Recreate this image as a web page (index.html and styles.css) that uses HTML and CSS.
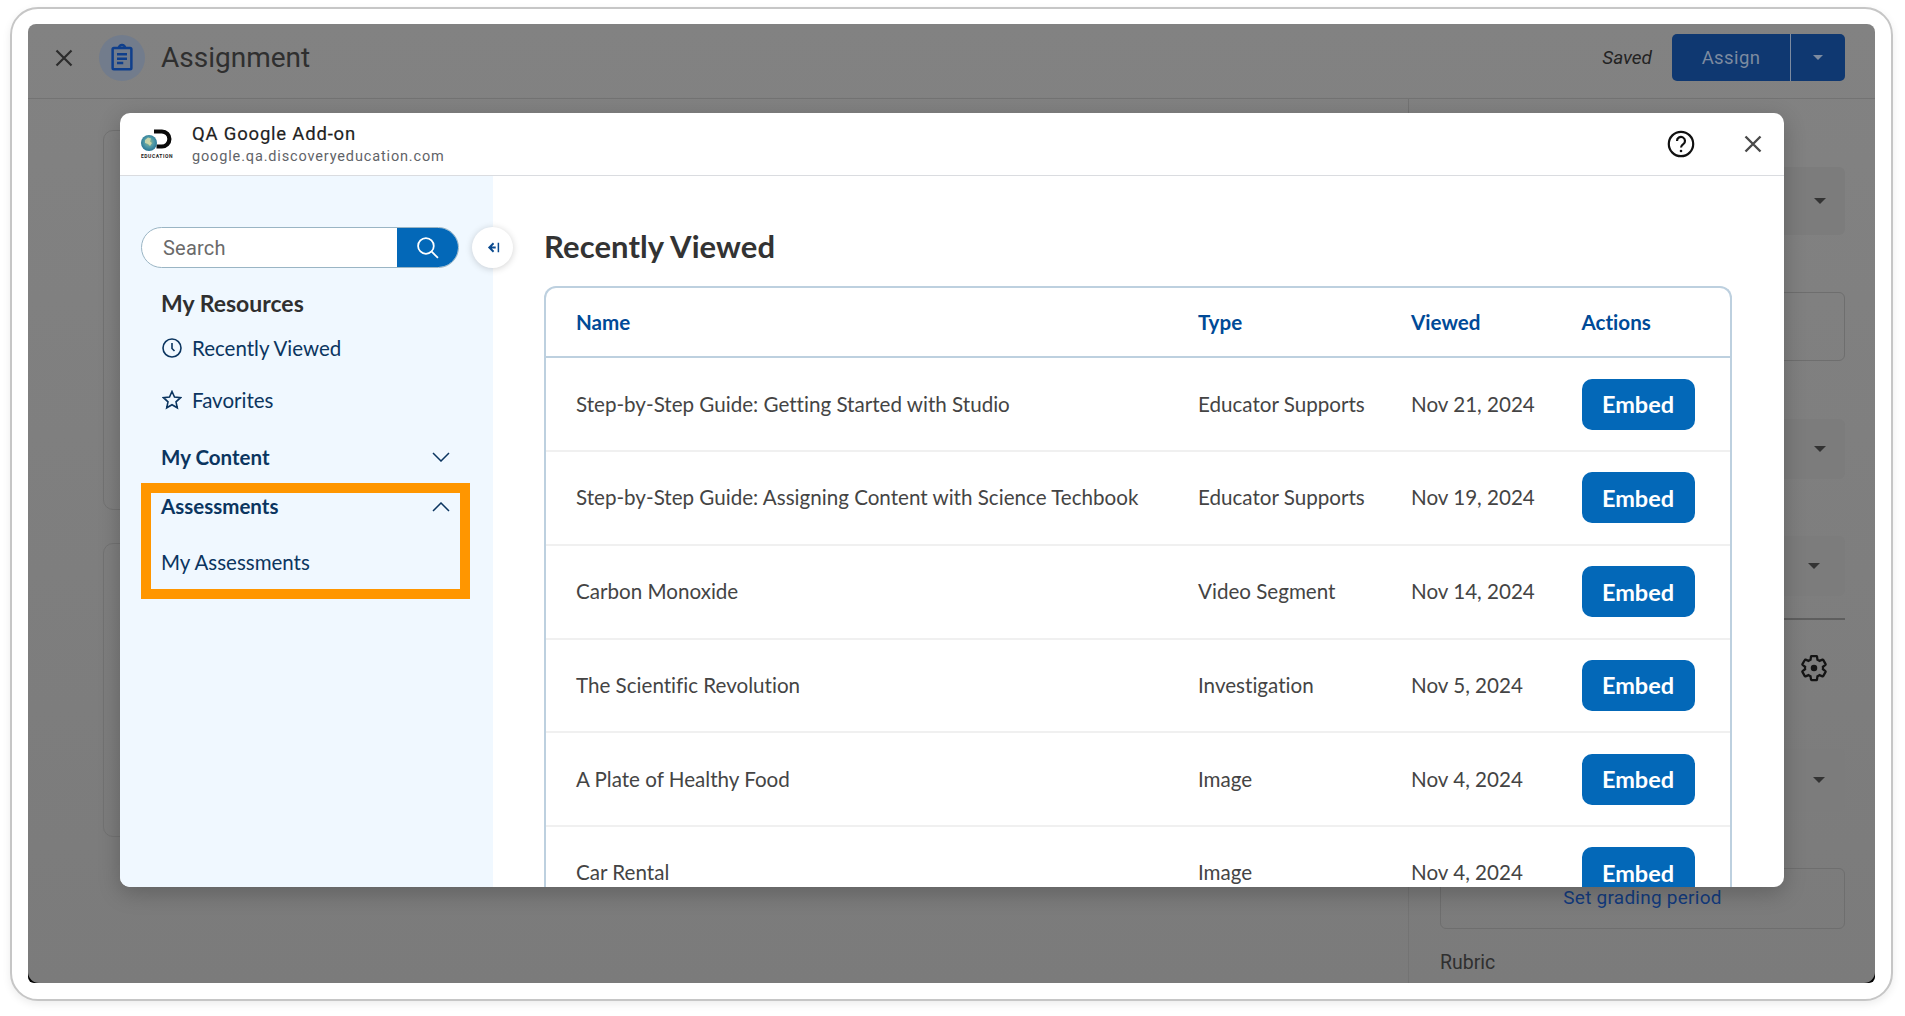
FILE: index.html
```html
<!DOCTYPE html>
<html lang="en">
<head>
<meta charset="utf-8">
<title>Assignment</title>
<link rel="stylesheet" href="styles.css">
</head>
<body>
<div class="frame">
  <div class="screen">
    <div class="screen-inner">
      <header class="topbar">
        <svg class="top-close" viewBox="0 0 20 20"><path d="M2.5 2.5l15 15M17.5 2.5l-15 15"/></svg>
        <span class="doc-badge">
          <svg class="doc-icon" viewBox="0 0 24 24"><path d="M5.5 4h13a1 1 0 0 1 1 1v15a1 1 0 0 1-1 1h-13a1 1 0 0 1-1-1V5a1 1 0 0 1 1-1z"/><path d="M9.5 4a2.5 2.5 0 0 1 5 0M8 9h8M8 12.5h8M8 16h5"/></svg>
        </span>
        <h1 class="top-title">Assignment</h1>
        <span class="saved">Saved</span>
        <div class="assign">
          <span class="assign-main">Assign</span>
          <span class="assign-more"><i class="caret caret-light"></i></span>
        </div>
      </header>
      <div class="workspace">
        <div class="bg-left">
          <div class="bg-card bg-card-one"></div>
          <div class="bg-card bg-card-two"></div>
        </div>
        <aside class="bg-right">
          <div class="dd dd-a"><i class="caret"></i></div>
          <div class="outline-box outline-a"></div>
          <div class="dd dd-b"><i class="caret"></i></div>
          <div class="dd dd-c"><i class="caret"></i></div>
          <div class="rule"></div>
          <div class="gear-row">
            <svg class="gear" viewBox="0 0 24 24"><path d="M19.14 12.94c.04-.3.06-.61.06-.94 0-.32-.02-.64-.07-.94l2.03-1.58c.18-.14.23-.41.12-.61l-1.92-3.32c-.12-.22-.37-.29-.59-.22l-2.39.96c-.5-.38-1.03-.7-1.62-.94l-.36-2.54c-.04-.24-.24-.41-.48-.41h-3.84c-.24 0-.43.17-.47.41l-.36 2.54c-.59.24-1.13.57-1.62.94l-2.39-.96c-.22-.08-.47 0-.59.22L2.74 8.87c-.12.21-.08.47.12.61l2.03 1.58c-.05.3-.09.63-.09.94s.02.64.07.94l-2.03 1.58c-.18.14-.23.41-.12.61l1.92 3.32c.12.22.37.29.59.22l2.39-.96c.5.38 1.03.7 1.62.94l.36 2.54c.05.24.24.41.48.41h3.84c.24 0 .44-.17.47-.41l.36-2.54c.59-.24 1.13-.56 1.62-.94l2.39.96c.22.08.47 0 .59-.22l1.92-3.32c.12-.22.07-.47-.12-.61l-2.01-1.58z"/><circle class="gear-dot" cx="12" cy="12" r="2.6"/></svg>
          </div>
          <div class="dd dd-d"><i class="caret"></i></div>
          <div class="outline-box outline-b"><span class="grading">Set grading period</span></div>
          <div class="rubric">Rubric</div>
        </aside>
      </div>
    </div>

    <section class="modal">
      <header class="modal-head">
        <div class="logo">
          <svg class="logo-mark" viewBox="0 0 34 23">
            <defs>
              <radialGradient id="globe" cx="50%" cy="45%" r="60%">
                <stop offset="0" stop-color="#9dbb86"/>
                <stop offset="0.5" stop-color="#4f9aa8"/>
                <stop offset="1" stop-color="#1d6d90"/>
              </radialGradient>
            </defs>
            <path class="logo-d" d="M14 0.500h8a9.500 9.500 0 0 1 0 19h-5.500v-4h5.300a5.500 5.500 0 0 0 0-11H14z"/>
            <circle cx="9" cy="14" r="8" fill="url(#globe)"/>
            <path d="M5 11l3-2.500 3 1-1 3 2 1.500-2 3-2-2-3-1z" fill="#d5dcae" opacity=".85"/>
          </svg>
          <span class="logo-text">EDUCATION</span>
        </div>
        <div class="addon">
          <div class="addon-name">QA Google Add-on</div>
          <div class="addon-url">google.qa.discoveryeducation.com</div>
        </div>
        <svg class="help" viewBox="0 0 28 28">
          <circle cx="14" cy="14" r="12.2"/>
          <path d="M10 11a4 4 0 1 1 6.300 3.200c-1.400 1-2.300 1.700-2.300 3.300"/>
          <circle class="help-dot" cx="14" cy="21" r="1.300"/>
        </svg>
        <svg class="modal-close" viewBox="0 0 18 18"><path d="M1.500 1.500l15 15M16.500 1.500l-15 15"/></svg>
      </header>
      <div class="modal-body">
        <nav class="sidebar">
          <div class="search">
            <span class="search-field">Search</span>
            <span class="search-btn">
              <svg class="search-icon" viewBox="0 0 22 22"><circle cx="9.500" cy="9.500" r="7.500"/><path d="M15 15l6 6"/></svg>
            </span>
          </div>
          <button class="collapse" type="button">
            <svg viewBox="0 0 14 14"><path class="collapse-arrow" d="M8 3L4 7l4 4M4 7h6"/><path class="collapse-bar" d="M12.500 2.500v9"/></svg>
          </button>
          <h2 class="nav-head">My Resources</h2>
          <a class="nav-link nav-recent">
            <svg class="nav-icon" viewBox="0 0 20 20"><circle cx="10" cy="10" r="9"/><path d="M10 5v5.500l2.500 2.500"/></svg>
            Recently Viewed
          </a>
          <a class="nav-link nav-fav">
            <svg class="nav-icon" viewBox="0 0 20 20"><path d="M10 1.500l2.500 5.600 6 .6-4.500 4.100 1.300 6L10 14.700l-5.300 3.100 1.300-6L1.500 7.700l6-.6z"/></svg>
            Favorites
          </a>
          <div class="nav-group nav-content">
            <span>My Content</span>
            <svg class="chev" viewBox="0 0 18 10"><path d="M1 1l8 8 8-8"/></svg>
          </div>
          <div class="highlight">
            <div class="nav-group">
              <span>Assessments</span>
              <svg class="chev" viewBox="0 0 18 10"><path d="M1 9l8-8 8 8"/></svg>
            </div>
            <a class="nav-sub">My Assessments</a>
          </div>
        </nav>
        <main class="main">
          <h2 class="main-title">Recently Viewed</h2>
          <div class="table">
            <div class="tr th">
              <span>Name</span><span>Type</span><span>Viewed</span><span>Actions</span>
            </div>
            <div class="tr">
              <span>Step-by-Step Guide: Getting Started with Studio</span><span>Educator Supports</span><span>Nov 21, 2024</span><button class="embed" type="button">Embed</button>
            </div>
            <div class="tr">
              <span>Step-by-Step Guide: Assigning Content with Science Techbook</span><span>Educator Supports</span><span>Nov 19, 2024</span><button class="embed" type="button">Embed</button>
            </div>
            <div class="tr">
              <span>Carbon Monoxide</span><span>Video Segment</span><span>Nov 14, 2024</span><button class="embed" type="button">Embed</button>
            </div>
            <div class="tr">
              <span>The Scientific Revolution</span><span>Investigation</span><span>Nov 5, 2024</span><button class="embed" type="button">Embed</button>
            </div>
            <div class="tr">
              <span>A Plate of Healthy Food</span><span>Image</span><span>Nov 4, 2024</span><button class="embed" type="button">Embed</button>
            </div>
            <div class="tr">
              <span>Car Rental</span><span>Image</span><span>Nov 4, 2024</span><button class="embed" type="button">Embed</button>
            </div>
          </div>
        </main>
      </div>
    </section>
  </div>
</div>
</body>
</html>
```

FILE: styles.css
```css
* { box-sizing: border-box; }
html, body { margin: 0; height: 100%; background: #fff; }
body { padding: 7px 12px 15px 10px; font-family: "Lato", "Liberation Sans", sans-serif; font-variant-ligatures: none; overflow: hidden; }

.frame {
  height: 994px;
  padding: 15px 16px 16px 16px;
  border: 2px solid #c6c6c6;
  border-radius: 28px;
  background: #fff;
  box-shadow: 0 3px 8px rgba(0, 0, 0, .08);
}
.screen {
  position: relative;
  height: 100%;
  border-radius: 8px 8px 6px 6px;
  background: linear-gradient(transparent 96%, #000 96%);
}
.screen-inner {
  display: flex;
  flex-direction: column;
  height: 100%;
  border-radius: 8px 8px 11px 11px;
  overflow: hidden;
  background: linear-gradient(#828282, #7b7b7b);
}

/* backdrop page */
.topbar {
  flex: none;
  display: flex;
  align-items: center;
  height: 75px;
  padding: 0 30px 7px 26px;
  border-bottom: 1px solid #737373;
}
.top-close { width: 20px; height: 20px; fill: none; stroke: #2c2c2c; stroke-width: 2.2; }
.doc-badge {
  display: flex; align-items: center; justify-content: center;
  width: 46px; height: 46px; margin-left: 25px;
  border-radius: 50%; background: #727c8c;
}
.doc-icon { width: 30px; height: 30px; fill: none; stroke: #0f3f8c; stroke-width: 2; }
.top-title { margin: 0 0 0 16px; font: 400 28px "Roboto", sans-serif; color: #2f2f2f; flex: 1; }
.saved { font: italic 400 19px "Roboto", sans-serif; color: #232323; margin-right: 20px; }
.assign { display: flex; height: 47px; border-radius: 5px; overflow: hidden; background: #0f3871; }
.assign-main {
  display: flex; align-items: center; justify-content: center;
  width: 119px; font: 400 18.500px "Roboto", sans-serif; letter-spacing: .4px; color: #7d8ba0;
  border-right: 1px solid #7d8ba0;
}
.assign-more { display: flex; align-items: center; justify-content: center; width: 54px; }
.caret {
  display: block; width: 0; height: 0;
  border-left: 6px solid transparent; border-right: 6px solid transparent; border-top: 6px solid #333;
}
.caret-light { border-left-width: 5px; border-right-width: 5px; border-top: 5px solid #7d8ba0; }

.workspace { flex: 1; display: flex; min-height: 0; }
.bg-left { flex: 1; padding: 31px 28px 0 75px; }
.bg-card { border: 1px solid #727272; border-radius: 10px; }
.bg-card-one { height: 380px; }
.bg-card-two { height: 294px; margin-top: 33px; }
.bg-right { flex: none; width: 467px; padding: 0 30px 0 31px; border-left: 1px solid #737373; }
.dd {
  display: flex; align-items: center; justify-content: flex-end;
  border-radius: 6px; background: #7c7c7c;
}
.dd-a { height: 68px; margin-top: 68px; padding-right: 19px; }
.outline-box { border: 1px solid #6e6e6e; border-radius: 6px; }
.outline-a { height: 69px; margin-top: 57px; }
.dd-b { height: 60px; margin-top: 58px; padding-right: 19px; }
.dd-c { height: 60px; margin-top: 57px; padding-right: 25px; }
.rule { height: 2px; margin-top: 22px; background: #5e5e5e; }
.gear-row { display: flex; justify-content: flex-end; padding-right: 16px; margin-top: 33px; }
.gear { width: 30px; height: 30px; fill: none; stroke: #141414; stroke-width: 1.8; }
.gear-dot { fill: #141414; stroke: none; }
.dd-d { height: 62px; margin-top: 66px; padding-right: 20px; }
.outline-b {
  display: flex; align-items: center; justify-content: center;
  height: 61px; margin-top: 57px; padding-bottom: 2px;
}
.grading { font: 400 19px "Roboto", sans-serif; letter-spacing: .25px; color: #123a7d; }
.rubric { margin-top: 22px; font: 400 19.500px "Roboto", sans-serif; color: #2f2f2f; }

/* dialog */
.modal {
  position: absolute;
  left: 92px; top: 89px; width: 1664px; height: 774px;
  display: flex; flex-direction: column;
  border-radius: 10px; overflow: hidden; background: #fff;
  box-shadow: 0 6px 22px rgba(0, 0, 0, .22);
}
.modal-head {
  flex: none; display: flex; align-items: center;
  height: 63px; padding: 0 22px 0 19px;
  border-bottom: 1px solid #dadce0;
}
.logo { flex: none; width: 36px; margin-right: 17px; display: flex; flex-direction: column; align-items: center; }
.logo-mark { display: block; width: 34px; height: 23px; }
.logo-d { fill: #0a0a0a; }
.logo-text { margin-top: 1px; font: 700 5px "Roboto", sans-serif; letter-spacing: .55px; color: #222; white-space: nowrap; }
.addon { flex: 1; }
.addon-name { font: 400 18.500px/24px "Roboto", sans-serif; letter-spacing: .8px; color: #1f1f1f; -webkit-text-stroke: .2px #1f1f1f; }
.addon-url { margin-top: 1px; font: 400 14.500px/20px "Roboto", sans-serif; letter-spacing: .85px; color: #5f6368; }
.help { width: 28px; height: 28px; margin-right: 49px; fill: none; stroke: #111; stroke-width: 2.200; }
.help-dot { fill: #111; stroke: none; }
.modal-close { width: 18px; height: 18px; fill: none; stroke: #4a4a4a; stroke-width: 2.400; }

.modal-body { flex: 1; display: flex; min-height: 0; }
.sidebar {
  position: relative; flex: none; width: 373px;
  padding: 51px 0 0 21px; background: #f0f8ff;
  color: #0b3560;
}
.search {
  display: flex; width: 318px; height: 41px; border-radius: 21px; overflow: hidden;
  border: 1px solid #9ab5c4; background: #fff;
}
.search-field { flex: 1; padding-left: 21px; font: 400 20px/41px "Roboto", sans-serif; color: #6a6a6a; letter-spacing: .2px; }
.search-btn { flex: none; width: 62px; display: flex; align-items: center; justify-content: center; background: #0368b8; margin: -1px -1px -1px 0; }
.search-icon { width: 23px; height: 23px; fill: none; stroke: #fff; stroke-width: 1.700; margin-left: -2px; }
.collapse {
  position: absolute; right: -20px; top: 51px;
  width: 41px; height: 41px; padding: 13px; border: 0; border-radius: 50%;
  background: #fff; box-shadow: 0 1px 7px rgba(0, 0, 0, .18);
}
.collapse svg { display: block; width: 15px; height: 15px; fill: none; stroke-width: 1.800; }
.collapse-arrow { stroke: #0b4a8f; }
.collapse-bar { stroke: #0b4a8f; stroke-width: 1.400; }

.nav-head { margin: 21px 0 0 20px; font: 700 23px/28px "Lato", sans-serif; color: #2f2f2f; }
.nav-link { display: flex; align-items: center; gap: 10px; padding-left: 21px; font-size: 20.500px; line-height: 24px; color: #0b3560; }
.nav-recent { margin-top: 19px; }
.nav-fav { margin-top: 28px; }
.nav-icon { width: 20px; height: 20px; fill: none; stroke: #0b3560; stroke-width: 1.600; }
.nav-group {
  display: flex; align-items: center; justify-content: space-between;
  font-weight: 700; font-size: 20.500px; line-height: 24px; color: #0b3560;
}
.nav-group .chev { width: 18px; height: 10px; fill: none; stroke: #0b3560; stroke-width: 1.500; }
.nav-content { margin-top: 33px; padding: 0 43px 0 20px; }
.highlight {
  width: 329px; height: 116px; margin-top: 14px; padding: 1px 10px 0 10px;
  border: 10px solid #ff9600;
}
.highlight .chev { margin-top: 2px; }
.nav-sub { display: block; margin-top: 32px; font-size: 20.500px; line-height: 24px; color: #0b3560; }

.main { flex: 1; min-width: 0; padding: 52px 52px 0 51px; overflow: hidden; }
.main-title { margin: 0; font: 700 31px/36px "Lato", sans-serif; letter-spacing: .1px; color: #333; }
.table {
  margin-top: 22px;
  border: 2px solid #bdd0df; border-bottom: 0; border-radius: 12px 12px 0 0;
}
.tr {
  display: grid; grid-template-columns: 622px 213px 170.500px 1fr;
  align-items: center; height: 93.750px; padding-left: 30px;
  font-size: 20.600px; color: #444; border-top: 2px solid #f0f0f0;
}
.tr > span { margin-bottom: 1px; }
.th {
  height: 70px; border-top: 0; border-bottom: 2px solid #bdd0df;
  font-weight: 700; color: #004a97;
}
.th + .tr { border-top: 0; height: 92px; }
.embed {
  width: 113px; height: 51px; padding: 0; border: 0; border-radius: 10px;
  background: #0368b8; color: #fff; font: 700 23.500px "Lato", sans-serif;
}
```
